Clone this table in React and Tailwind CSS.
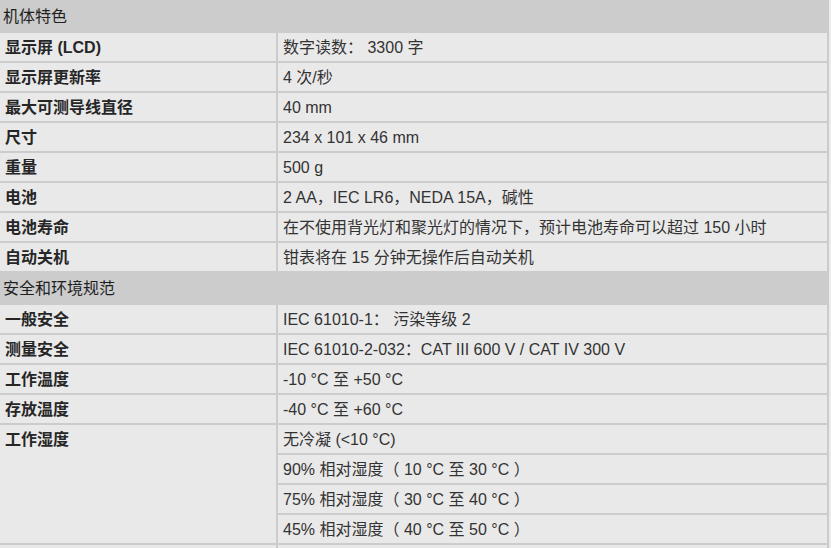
const sections = [
  {
    title: '机体特色',
    rows: [
      ['显示屏 (LCD)', ['数字读数： 3300 字']],
      ['显示屏更新率', ['4 次/秒']],
      ['最大可测导线直径', ['40 mm']],
      ['尺寸', ['234 x 101 x 46 mm']],
      ['重量', ['500 g']],
      ['电池', ['2 AA，IEC LR6，NEDA 15A，碱性']],
      ['电池寿命', ['在不使用背光灯和聚光灯的情况下，预计电池寿命可以超过 150 小时']],
      ['自动关机', ['钳表将在 15 分钟无操作后自动关机']],
    ],
  },
  {
    title: '安全和环境规范',
    rows: [
      ['一般安全', ['IEC 61010-1： 污染等级 2']],
      ['测量安全', ['IEC 61010-2-032：CAT III 600 V / CAT IV 300 V']],
      ['工作温度', ['-10 °C 至 +50 °C']],
      ['存放温度', ['-40 °C 至 +60 °C']],
      [
        '工作湿度',
        [
          '无冷凝 (<10 °C)',
          '90% 相对湿度（ 10 °C 至 30 °C ）',
          '75% 相对湿度（ 30 °C 至 40 °C ）',
          '45% 相对湿度（ 40 °C 至 50 °C ）',
        ],
      ],
      ['', ['']],
    ],
  },
]

function SpecRows({ label, values }) {
  return values.map((v, i) => (
    <tr key={i}>
      {i === 0 && (
        <td
          rowSpan={values.length}
          className="w-[274px] bg-[#e9e9e9] pl-[5px] pr-2 pt-[2px] pb-0 align-top leading-[26px] h-[28px] font-bold text-[#262626] text-[16px] whitespace-nowrap"
        >
          {label}
        </td>
      )}
      <td className="bg-[#e9e9e9] pl-[5px] pr-2 pt-[2px] pb-0 h-[28px] leading-[26px] align-top text-[#333] text-[16px] whitespace-nowrap">
        {v}
      </td>
    </tr>
  ))
}

export default function App() {
  return (
    <div
      className="w-[831px] h-[548px] overflow-hidden bg-[#ebebeb]"
      style={{ fontFamily: '"Liberation Sans", "Noto Sans CJK SC", sans-serif' }}
    >
      <table className="-ml-[2px] -mt-[1px] w-[831px] bg-[#cccccc] border-separate border-spacing-[2px] table-fixed">
        <colgroup>
          <col className="w-[276px]" />
          <col />
        </colgroup>
        <tbody>
          {sections.map((s) => (
            <SectionBlock key={s.title} section={s} />
          ))}
        </tbody>
      </table>
    </div>
  )
}

function SectionBlock({ section }) {
  return (
    <>
      <tr>
        <td colSpan={2} className="bg-[#cccccc] pl-[3px] pt-[1px] pb-0 h-[30px] leading-[29px] align-top text-[16px] text-[#1f1f1f] whitespace-nowrap">
          {section.title}
        </td>
      </tr>
      {section.rows.map(([label, values]) => (
        <SpecRows key={label + values[0]} label={label} values={values} />
      ))}
    </>
  )
}
